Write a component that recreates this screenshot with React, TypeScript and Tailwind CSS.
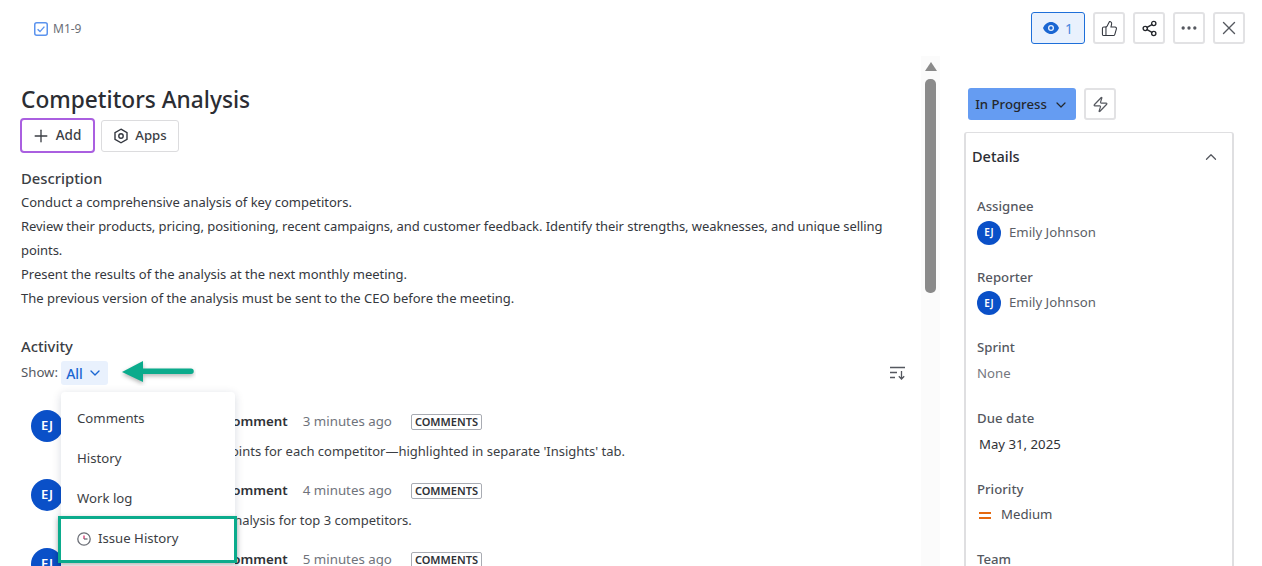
import { ChevronDown, ChevronUp, Ellipsis, Plus, Share2, ThumbsUp, X, Zap } from "lucide-react";

const FONT = "font-['Noto_Sans','Open_Sans',sans-serif]";

function HeaderButton({ children }: { children: React.ReactNode }) {
  return (
    <button className="flex h-8 w-8 items-center justify-center rounded-[3px] border-2 border-[#e2e2e4] bg-white text-[#33373f]">
      {children}
    </button>
  );
}

function Avatar({ size }: { size: "sm" | "lg" }) {
  return (
    <div
      className={
        size === "lg"
          ? "flex h-8 w-8 shrink-0 items-center justify-center rounded-full bg-[#0a50c8] text-[13px] font-semibold text-white"
          : "flex h-6 w-6 shrink-0 items-center justify-center rounded-full bg-[#0a50c8] text-[10px] font-semibold text-white"
      }
    >
      EJ
    </div>
  );
}

function Comment({ ago, body }: { ago: string; body: string }) {
  return (
    <div className="flex h-[69px] gap-3 pl-[10px]">
      <Avatar size="lg" />
      <div className="min-w-0">
        <div className="flex h-6 items-center whitespace-nowrap pl-px text-[13.3px]">
          <span className="font-semibold text-[#2f3237]">Emily Johnson added a comment</span>
          <span className="ml-[15px] text-[#6f737b]">{ago}</span>
          <span className="ml-[19px] rounded-[2px] border border-[#a9acb3] px-[3px] text-[11px] leading-[14px] font-semibold text-[#2f3237]">
            COMMENTS
          </span>
        </div>
        <p className="mt-[7px] whitespace-nowrap pl-[2px] text-[13px] leading-5 text-[#3b3e44]">{body}</p>
      </div>
    </div>
  );
}

function Field({ label, children }: { label: string; children: React.ReactNode }) {
  return (
    <div className="h-[70.7px]">
      <div className="text-[13.2px] leading-5 font-medium text-[#55585f]">{label}</div>
      <div className="mt-[4.5px] flex h-6 items-center text-[13.2px]">{children}</div>
    </div>
  );
}

export default function App() {
  return (
    <div className={`${FONT} relative flex h-[566px] w-[1262px] flex-col overflow-hidden bg-white`}>
      <header className="flex h-[56px] shrink-0 items-start justify-between pt-3 pl-[34px] pr-[17px]">
        <div className="flex h-[33px] items-center gap-[5px] text-[12px] text-[#6b6e76]">
          <svg width="14" height="14" viewBox="0 0 14 14" fill="none">
            <rect x="0.75" y="0.75" width="12.5" height="12.5" rx="2" stroke="#5b93ee" strokeWidth="1.5" />
            <path d="M3.6 7.2 6 9.6l4.4-5" stroke="#5b93ee" strokeWidth="1.4" />
          </svg>
          M1-9
        </div>
        <div className="flex gap-2">
          <button className="flex h-8 w-[54px] items-center justify-center gap-[6px] rounded-[3px] border border-[#1e6fd9] bg-[#e9f1fd] text-[14px] text-[#4a86dd]">
            <svg width="16" height="12" viewBox="0 0 16 12">
              <path d="M8 0C4.4 0 1.5 2.4 0 6c1.5 3.6 4.4 6 8 6s6.500-2.400 8-6c-1.500-3.600-4.400-6-8-6Z" fill="#1a66d2" />
              <circle cx="8" cy="6" r="3" fill="#e9f1fd" />
              <circle cx="8" cy="6" r="1.700" fill="#1a66d2" />
            </svg>
            1
          </button>
          <HeaderButton>
            <ThumbsUp size={17} strokeWidth={1.5} />
          </HeaderButton>
          <HeaderButton>
            <Share2 size={17} strokeWidth={1.9} className="text-[#24272c]" />
          </HeaderButton>
          <HeaderButton>
            <Ellipsis size={20} strokeWidth={2} className="text-[#55585f]" />
          </HeaderButton>
          <HeaderButton>
            <X size={22} strokeWidth={1.5} className="text-[#55585f]" />
          </HeaderButton>
        </div>
      </header>

      <main className="flex min-h-0 flex-1">
        <section className="w-[921px] shrink-0 pt-[28px] pl-[21px]">
          <h1 className="text-[22.7px] leading-8 font-medium text-[#2b2d33]">Competitors Analysis</h1>
          <div className="mt-[2px] flex items-center gap-[6px]">
            <button className="-ml-px flex h-[35px] w-[75px] items-center justify-center gap-[5px] rounded-[4px] border-2 border-[#aa5fe0] pr-[3px] text-[13.5px] font-medium text-[#3b3e44]">
              <Plus size={20} strokeWidth={1.6} />
              Add
            </button>
            <button className="flex h-[32px] w-[78px] items-center justify-center gap-[6px] rounded-[3px] border border-[#dcdcde] text-[13.2px] font-medium text-[#3b3e44]">
              <svg width="16" height="16" viewBox="0 0 16 16" fill="none" stroke="#33373f" strokeWidth="1.4">
                <path d="M8 1.200 14 4.600v6.800L8 14.800 2 11.400V4.600Z" />
                <circle cx="8" cy="8" r="2.200" />
              </svg>
              Apps
            </button>
          </div>

          <h2 className="mt-[15px] text-[14.8px] leading-5 font-medium text-[#3b3e44]">Description</h2>
          <div className="mt-[3px] w-[880px] text-[13px] leading-6 text-[#35383e]">
            <p className="leading-[23px]">Conduct a comprehensive analysis of key competitors.</p>
            <p className="tracking-[-0.06px]">Review their products, pricing, positioning, recent campaigns, and customer feedback. Identify their strengths, weaknesses, and unique selling points.</p>
            <p>Present the results of the analysis at the next monthly meeting.</p>
            <p>The previous version of the analysis must be sent to the CEO before the meeting.</p>
          </div>

          <h2 className="mt-[26px] text-[14.8px] leading-5 font-medium text-[#3b3e44]">Activity</h2>
          <div className="mt-[5px] flex h-6 w-[885px] items-center justify-between text-[13.2px]">
            <div className="flex items-center gap-[3px] text-[#55585f]">
              Show:
              <span className="flex h-6 w-[47px] items-center justify-center gap-1 rounded-[3px] bg-[#e9f1fd] text-[14px] font-medium text-[#1a66d2]">
                All
                <ChevronDown size={16} strokeWidth={2} />
              </span>
            </div>
            <svg width="16" height="14" viewBox="0 0 16 14" fill="none" stroke="#55585f" strokeWidth="1.300">
              <path d="M0 1.500h15M0 6.500h7M0 11.500h5M11.500 5v8M8.800 10.300l2.700 2.700 2.700-2.700" />
            </svg>
          </div>

          <div className="mt-[25px]">
            <Comment ago="3 minutes ago" body="Added three key selling points for each competitor—highlighted in separate 'Insights' tab." />
            <Comment ago="4 minutes ago" body="Completed the round of analysis for top 3 competitors." />
            <Comment ago="5 minutes ago" body="Started the analysis." />
          </div>
        </section>

        <div className="relative w-[19px] shrink-0 bg-[#fbfbfb]">
          <div className="absolute top-[6px] left-[4px] h-0 w-0 border-x-[6.500px] border-b-[9px] border-x-transparent border-b-[#8a8a8a]" />
          <div className="absolute top-[23px] left-[4px] h-[214px] w-[11px] rounded-[5px] bg-[#8a8a8a]" />
        </div>

        <aside className="flex-1 pt-[32px] pl-[28px]">
          <div className="flex items-center gap-2">
            <button className="flex h-8 w-[108px] items-center justify-center gap-[6px] rounded-[3px] bg-[#659cf2] pt-px text-[13.2px] font-medium text-[#24272c]">
              In Progress
              <ChevronDown size={16} strokeWidth={1.8} />
            </button>
            <button className="flex h-8 w-8 items-center justify-center rounded-[3px] border-2 border-[#e2e2e4] text-[#55585f]">
              <Zap size={17} strokeWidth={1.7} />
            </button>
          </div>
          <div className="mt-3 -ml-[4px] w-[270px] rounded-t-[3px] border-x-2 border-t border-[#dfdfe1]">
            <div className="flex h-[48px] items-center justify-between pr-[12px] pl-[6px]">
              <span className="text-[14.5px] font-medium text-[#2b2d33]">Details</span>
              <ChevronUp size={18} strokeWidth={1.7} className="text-[#55585f]" />
            </div>
            <div className="pt-[15px] pl-[11px]">
              <Field label="Assignee">
                <Avatar size="sm" />
                <span className="ml-2 text-[#5c5f67]">Emily Johnson</span>
              </Field>
              <Field label="Reporter">
                <Avatar size="sm" />
                <span className="ml-2 text-[#5c5f67]">Emily Johnson</span>
              </Field>
              <Field label="Sprint">
                <span className="text-[#74777e]">None</span>
              </Field>
              <Field label="Due date">
                <span className="ml-[2px] text-[#2f3237]">May 31, 2025</span>
              </Field>
              <Field label="Priority">
                <span className="ml-[2px] flex w-[12px] flex-col gap-[3px]">
                  <span className="h-[2px] bg-[#e56910]" />
                  <span className="h-[2px] bg-[#e56910]" />
                </span>
                <span className="ml-[10px] text-[#4b4e55]">Medium</span>
              </Field>
              <Field label="Team">
                <span />
              </Field>
            </div>
          </div>
        </aside>
      </main>

      {/* menu and callouts sit on top of the activity list */}
      <div className="absolute top-[392px] left-[61px] h-[190px] w-[174px] rounded-[4px] bg-white pt-[7px] text-[13.2px] text-[#3b3e44] shadow-[0_2px_10px_rgba(9,30,66,0.16)]">
        <div className="flex h-10 items-center pl-4">Comments</div>
        <div className="flex h-10 items-center pl-4">History</div>
        <div className="flex h-10 items-center pl-4">Work log</div>
        <div className="flex h-10 items-center gap-[7px] pl-4">
          <svg width="14" height="14" viewBox="0 0 14 14" fill="none">
            <circle cx="7" cy="7" r="6.200" stroke="#6b6e76" strokeWidth="1.300" />
            <path d="M7 3.500V7" stroke="#d6336c" strokeWidth="1.300" />
            <path d="M7 7h3.500" stroke="#6b6e76" strokeWidth="1.300" />
          </svg>
          Issue History
        </div>
      </div>
      <div className="absolute top-[516px] left-[58px] h-[47px] w-[179px] border-[3px] border-[#0bab8c] shadow-[0_2px_5px_rgba(0,0,0,0.3)]" />
      <svg className="absolute top-[360px] left-[120px]" width="76" height="26" viewBox="0 0 76 26">
        <path d="M2 12 23 1v7.500h48a2.500 2.500 0 0 1 0 5.500H23v8Z" fill="#0bab8c" style={{ filter: "drop-shadow(0 2px 2px rgba(0,0,0,0.3))" }} />
      </svg>
    </div>
  );
}
